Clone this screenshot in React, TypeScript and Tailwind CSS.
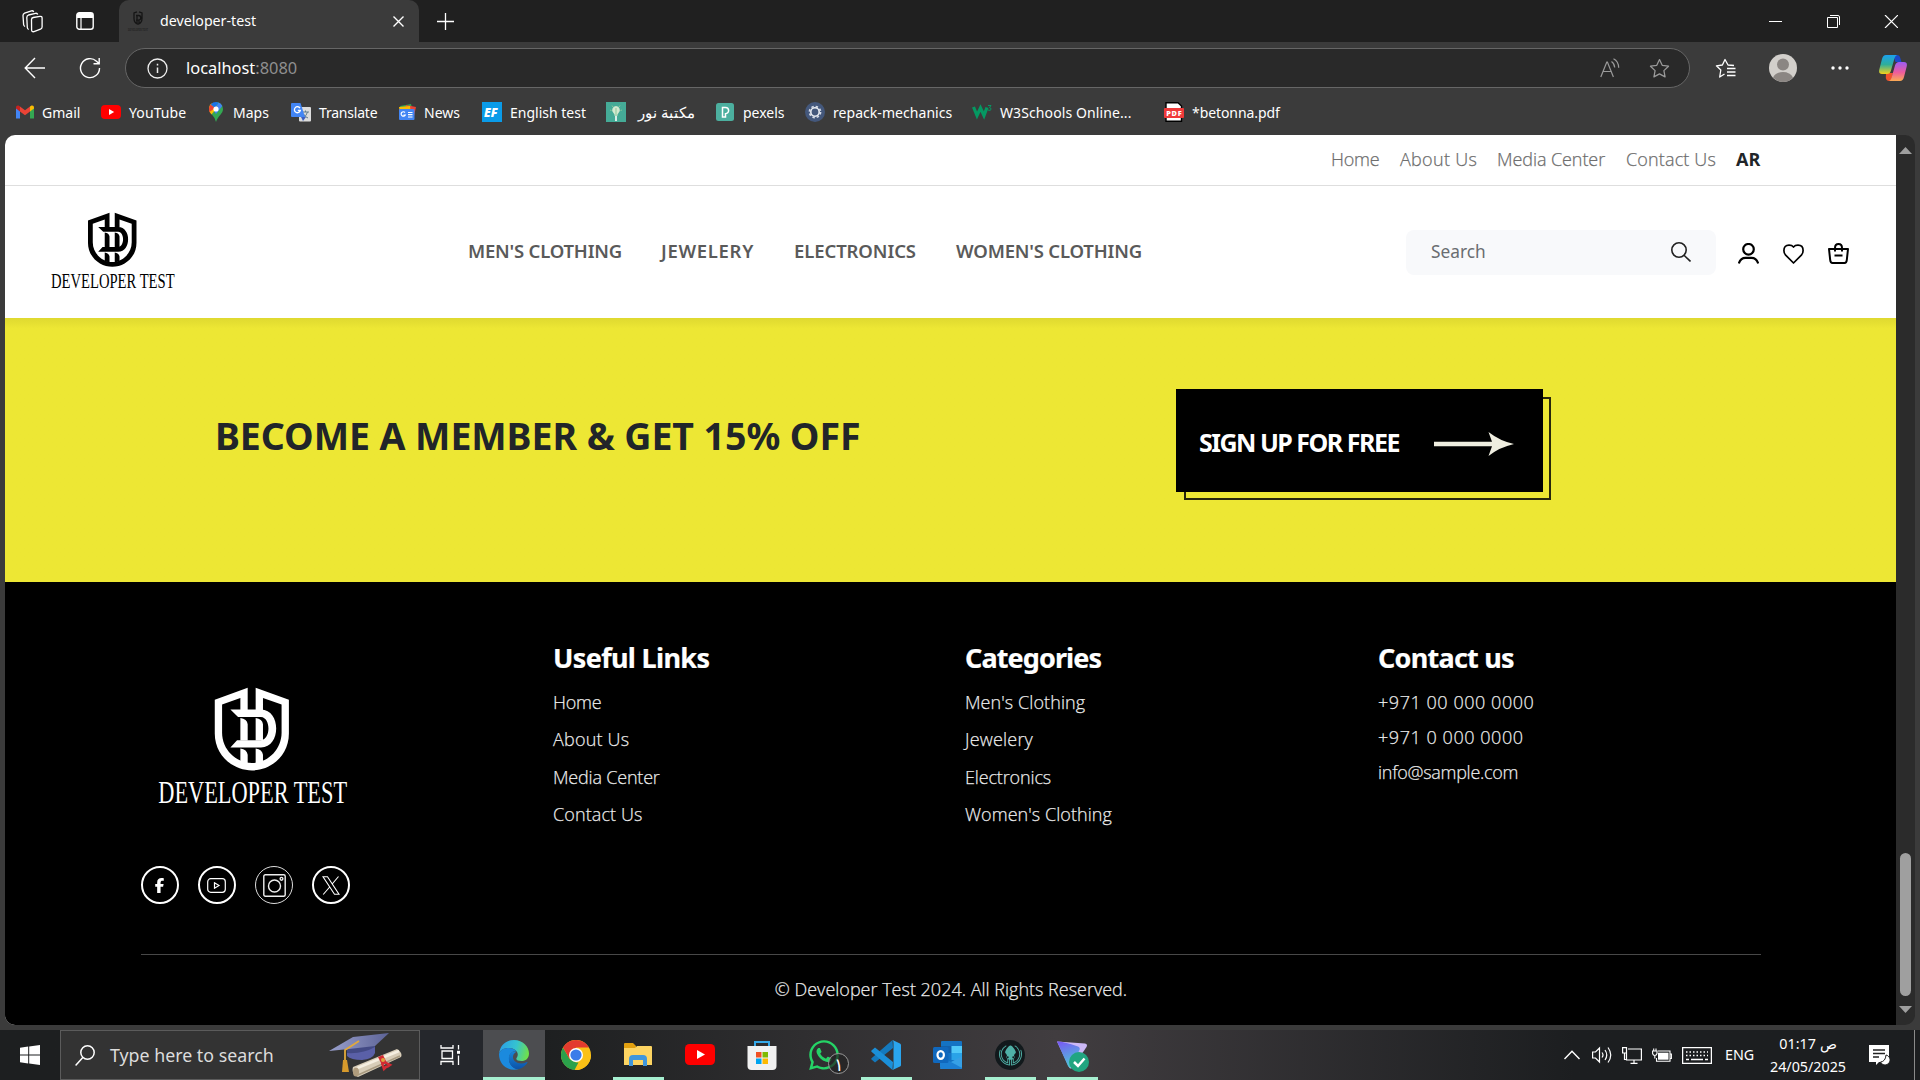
import React from "react";
import { FaFacebookF, FaWhatsapp } from "react-icons/fa6";
import { SiGitkraken } from "react-icons/si";

type Kids = { children?: React.ReactNode };

/* ---------- Brand ---------- */

function Logo({ className }: { className: string }) {
  return (
    <svg viewBox="115 80 570 352" className={`overflow-visible ${className}`} fill="currentColor">
      <path d="M384 82 285 118V220C285 288 342 331 397 331S508 288 508 220V118L408 82V150H430V113L486 133V218C486 268 445 309 397 309 348 309 307 268 307 218V133L362 113V150H384Z" />
      <path d="M332 148H424C485 148 485 262 424 262H332L352 240H424C454 238 454 172 424 170H355Z" />
      <path d="M362 173Q382 175 384 192V241H362ZM408 173Q428 175 430 192V241H408Z" />
      <path d="M362 265Q382 268 384 284V312L362 304ZM408 265Q428 268 430 284V304L408 312Z" />
      <text
        x="115"
        y="428"
        textLength="568"
        lengthAdjust="spacingAndGlyphs"
        className="font-['Liberation_Serif',serif] text-[98px]"
      >
        DEVELOPER TEST
      </text>
    </svg>
  );
}

/* ---------- Browser chrome ---------- */

function TabStrip() {
  return (
    <div className="flex h-[42px] items-center bg-[#202020] text-white">
      <svg className="ml-[22px] h-[24px] w-[21px]" viewBox="0 0 21 24" fill="none" stroke="currentColor" strokeWidth="1.300" strokeLinejoin="round">
        <path d="M9.500 10.500Q9.600 8.800 11.200 8.500L18 7.300Q20 7.100 20.100 9V18Q20 19.700 18.500 20.200L12 22.600Q9.700 23.200 9.600 21Z" />
        <path d="M6.700 20.500Q5.500 20 5.300 18.500L4.800 8.500Q4.900 6.500 6.500 6L13.500 4.300Q15.200 4 15.800 5.500" />
        <path d="M3 17.500Q1.800 17 1.600 15.500L1 6.500Q1 4.700 2.600 4.100L9.500 1.800Q11 1.500 11.800 2.800" />
      </svg>
      <svg className="ml-[33px] h-[18px] w-[18px]" viewBox="0 0 18 18">
        <rect x=".8" y=".8" width="16.400" height="16.400" rx="2.500" fill="none" stroke="#fff" strokeWidth="1.400" />
        <path d="M1 2.500Q1 1 2.500 1H15.500Q17 1 17 2.500V6H1Z" fill="#fff" />
        <path d="M5 6V17" stroke="#fff" strokeWidth="1.200" />
      </svg>
      <div className="ml-[25px] flex h-[42px] w-[300px] items-center rounded-t-[10px] bg-[#3b3b3b]">
        <svg className="ml-[9px] h-[20px] w-[20px] overflow-visible text-[#151515]" viewBox="0 0 20 20" fill="none" stroke="currentColor">
          <path d="M9 .8 6 2V7.500Q6 12 10 13.200 14 12 14 7.500V2L11 .8M8 4.500H10.500a2.300 2.300 0 0 1 0 4.600H8M9 4.500V12M11 9V12" strokeWidth="1.300" />
          <text x="0" y="19.500" textLength="20" lengthAdjust="spacingAndGlyphs" fontSize="5" fill="currentColor" stroke="none" className="font-['Liberation_Serif',serif]">
            DEVELOPER TEST
          </text>
        </svg>
        <span className="ml-[12px] w-[233px] text-[14.200px]">developer-test</span>
        <svg className="h-[11px] w-[11px]" viewBox="0 0 11 11" stroke="#fff" strokeWidth="1.400">
          <path d="M.5.500l10 10M10.500.5l-10 10" />
        </svg>
      </div>
      <svg className="ml-[18px] h-[17px] w-[17px]" viewBox="0 0 17 17" stroke="#fff" strokeWidth="1.300">
        <path d="M8.500 0v17M0 8.500h17" />
      </svg>
      <svg className="mr-[22px] ml-auto h-[13px] w-[129px]" viewBox="0 0 129 13" fill="none" stroke="#fff" strokeWidth="1">
        <path d="M0 6.500H13" />
        <path d="M58.500 2.500h10v10h-10zM61 .5h8q1.500 0 1.500 1.500v8" />
        <path d="M116 0l13 13M129 0l-13 13" strokeWidth="1.200" />
      </svg>
    </div>
  );
}

const starPath = "M10 1.500 12.600 7 18.600 7.800 14.200 12 15.300 18 10 15.100 4.700 18 5.800 12 1.400 7.800 7.400 7Z";

function AddressRow() {
  return (
    <div className="flex h-[52px] items-center bg-[#3b3b3b] text-white">
      <svg className="ml-[24px] h-[22px] w-[22px]" viewBox="0 0 22 22" fill="none" stroke="#fff" strokeWidth="1.400">
        <path d="M21 11H1.500M11 1 1.200 11 11 21" />
      </svg>
      <svg className="ml-[33px] h-[22px] w-[22px]" viewBox="0 0 22 22" fill="none" stroke="#fff" strokeWidth="1.400">
        <path d="M20.500 11A9.500 9.500 0 1 1 17.500 4.200L20 6.500M20.200 1V6.800H14.500" />
      </svg>
      <div className="ml-[24px] flex h-[40px] w-[1565px] items-center rounded-full border border-[#666] bg-[#292929]">
        <svg className="ml-[21px] h-[21px] w-[21px]" viewBox="0 0 21 21" fill="none" stroke="#eee" strokeWidth="1.300">
          <circle cx="10.500" cy="10.500" r="9.500" />
          <path d="M10.500 9.500v5.500M10.500 5.800v1.600" strokeWidth="1.500" />
        </svg>
        <span className="ml-[18px] text-[16.400px]">
          localhost<span className="text-[#8f8f8f]">:8080</span>
        </span>
        <svg className="mb-[1px] ml-auto h-[20px] w-[20px]" viewBox="0 0 20 20" fill="none" stroke="#9a9a9a" strokeWidth="1.200">
          <path d="M.8 19 6.800 4h.6l6 15M3 13.500h8.200M11.500 3.500q3 2 3.200 6M13.500.8q5 2.500 5.200 9" />
        </svg>
        <svg className="mr-[19px] ml-[29px] h-[21px] w-[21px]" viewBox="0 0 20 20" fill="none" stroke="#9a9a9a" strokeWidth="1.200" strokeLinejoin="round">
          <path d={starPath} />
        </svg>
      </div>
      <svg className="ml-[25px] h-[21px] w-[21px]" viewBox="0 0 21 21" fill="none" stroke="#fff" strokeWidth="1.300" strokeLinejoin="round">
        <path d="M19 7.500 13 7 10 1.500 7.400 7 1.400 7.800 5.800 12 4.700 19 9.500 16M12 10.500h8.500M12 14h8.500M12 17.500h8.500" />
      </svg>
      <svg className="ml-[33px] h-[28px] w-[28px]" viewBox="0 0 28 28">
        <circle cx="14" cy="14" r="14" fill="#d2cfcb" />
        <circle cx="14" cy="10.500" r="6" fill="#8b8683" />
        <path d="M4 23.500Q7 18 14 18T24 23.500Q20 28 14 28T4 23.500Z" fill="#8b8683" />
      </svg>
      <svg className="ml-[34px] h-1 w-[18px]" viewBox="0 0 18 4" fill="#fff">
        <circle cx="2" cy="2" r="1.700" />
        <circle cx="9" cy="2" r="1.700" />
        <circle cx="16" cy="2" r="1.700" />
      </svg>
      <svg className="ml-[30px] h-[26px] w-[28px]" viewBox="0 0 28 26">
        <defs>
          <linearGradient id="cpA" x1="0" y1="0" x2="0" y2="1">
            <stop offset="0" stopColor="#1ba1ee" />
            <stop offset=".5" stopColor="#2fae9a" />
            <stop offset="1" stopColor="#f4d21b" />
          </linearGradient>
          <linearGradient id="cpB" x1="0" y1="0" x2="0" y2="1">
            <stop offset="0" stopColor="#9c5cf4" />
            <stop offset=".55" stopColor="#ee5c9c" />
            <stop offset="1" stopColor="#fbab53" />
          </linearGradient>
        </defs>
        <path d="M14 0h4q2.500 0 3.300 3l1.200 4h-6z" fill="#1b48c8" />
        <path d="M7 18h7l-2 8H10q-2.500 0-3.200-3z" fill="#f0522d" />
        <path d="M7 0h11q-1.800.5-2.600 3.500L12 15.500Q11 19 8 19H3Q-.7 19 .3 14.500L3 4Q4 0 7 0Z" fill="url(#cpA)" />
        <path d="M21 26H10q1.800-.5 2.600-3.500L16 10.500Q17 7 20 7h5q3.700 0 2.700 4.500L25 22q-1 4-4 4Z" fill="url(#cpB)" />
      </svg>
    </div>
  );
}

function BookmarkIcon({ children }: Kids) {
  return (
    <svg className="h-5 w-5 shrink-0" viewBox="0 0 20 20">
      {children}
    </svg>
  );
}

function Bookmark({ icon, label, width, textClass = "" }: { icon: React.ReactNode; label: string; width: string; textClass?: string }) {
  return (
    <div className={`flex items-center gap-[7px] whitespace-nowrap ${width}`}>
      <BookmarkIcon>{icon}</BookmarkIcon>
      <span className={textClass}>{label}</span>
    </div>
  );
}

function Bookmarks() {
  return (
    <div className="flex h-[41px] items-center bg-[#3b3b3b] pb-[5px] pl-[15px] text-[14px] text-white">
      <Bookmark
        width="w-[86px]"
        label="Gmail"
        icon={
          <>
            <path d="M1 5.500V16.500h4V9z" fill="#4285f4" />
            <path d="M19 5.500V16.500h-4V9z" fill="#34a853" />
            <path d="M1 5.500Q1 3 3.500 3.500L5 4.500V9.500L1 6.500z" fill="#c5221f" />
            <path d="M5 4.500 10 8.300 15 4.500V9.500L10 13.300 5 9.500z" fill="#ea4335" />
            <path d="M15 4.500 16.500 3.500Q19 3 19 5.500V6.500L15 9.500z" fill="#fbbc04" />
          </>
        }
      />
      <Bookmark
        width="w-[105px]"
        label="YouTube"
        textClass="pl-px tracking-[0.100px]"
        icon={
          <>
            <rect y="3" width="20" height="14" rx="4" fill="#f00" />
            <path d="M8 7v6l5.200-3z" fill="#fff" />
          </>
        }
      />
      <Bookmark
        width="w-[85px]"
        label="Maps"
        icon={
          <>
            <path d="M10 0a7 7 0 0 1 7 7c0 5-5 6.500-7 13Q8.500 15 5.500 12z" fill="#34a853" />
            <path d="M3 7q0 3 2.500 5.500L12 4.500 6 1.200Q3 3 3 7Z" fill="#fbbc04" />
            <path d="M4.700 2.500 9 6 3.500 10Q2 6 4.700 2.500Z" fill="#ea4335" />
            <path d="M4.700 2.500Q8-1 12.500.5L9 6z" fill="#1a73e8" />
            <path d="M12.500.5Q15 1.200 16.300 4L10 12 8 9z" fill="#4285f4" />
            <circle cx="10" cy="7" r="2.600" fill="#fff" />
          </>
        }
      />
      <Bookmark
        width="w-[106px]"
        label="Translate"
        textClass="pl-px tracking-[-0.200px]"
        icon={
          <>
            <rect x="8" y="5" width="12" height="14.500" rx="1" fill="#dcdcdc" />
            <path d="M11 10h7M14.500 8.500V10M16.500 10q-1 4-4.500 6M12.500 12q1.500 3 4.500 4" stroke="#607d8b" fill="none" />
            <path d="M10 15h5l-3 4z" fill="#3b5fc0" />
            <path d="M1 1h8.500L14 15H1Q0 15 0 14V2Q0 1 1 1Z" fill="#4285f4" />
            <path d="M9 6.200A3 3 0 1 0 9.300 8.500H6.800" stroke="#fff" strokeWidth="1.300" fill="none" />
          </>
        }
      />
      <Bookmark
        width="w-[85px]"
        label="News"
        icon={
          <>
            <path d="M3 4 14 2l2 8H5z" fill="#34a853" />
            <path d="M9 3 19 5l-2 9-9-3z" fill="#ea4335" />
            <path d="M2 5l11-1 1 8H3z" fill="#fbbc04" />
            <rect x="2" y="7" width="15.500" height="11" rx="1" fill="#4285f4" />
            <path d="M8 10.500A2.200 2.200 0 1 0 8.300 13H6.500M11 10.500h4.500M11 12.700h4.500M11 15h4.500" stroke="#fff" strokeWidth="1.200" fill="none" />
          </>
        }
      />
      <Bookmark
        width="w-[124px]"
        label="English test"
        textClass="pl-px"
        icon={
          <>
            <path d="M0 0H20V20H0Z" fill="#0a9be8" />
            <text x="2" y="14.500" fontSize="12" className="font-['Open_Sans',sans-serif] font-extrabold italic" fill="#fff">
              EF
            </text>
          </>
        }
      />
      <Bookmark
        width="w-[109px]"
        label="مكتبة نور"
        textClass="ml-[5px] text-[15px]"
        icon={
          <>
            <path d="M0 0H20V20H0Z" fill="#45ab97" />
            <path d="M10 19V12" stroke="#fff" strokeWidth="1.600" />
            <path d="M10 4a4 4 0 0 1 2.500 7q-1.200 1-1.200 3H8.700q0-2-1.200-3A4 4 0 0 1 10 4Z" fill="#d4ead0" />
            <path d="M10 6v8M4 8l1.500.5M16 8l-1.500.5M6 3.500 7 5M14 3.500 13 5" stroke="#8bc79a" />
          </>
        }
      />
      <Bookmark
        width="w-[90px]"
        label="pexels"
        textClass="pl-px"
        icon={
          <>
            <rect x="1" y="1" width="18" height="18" rx="2.500" fill="#4caf9f" />
            <path d="M7.500 15V5.500H10.500a3 3 0 0 1 0 6.200V15z" stroke="#fff" strokeWidth="1.500" fill="none" />
          </>
        }
      />
      <Bookmark
        width="w-[167px]"
        label="repack-mechanics"
        textClass="pl-px tracking-[0.050px]"
        icon={
          <>
            <circle cx="10" cy="10" r="10" fill="#44587c" />
            <circle cx="10" cy="10" r="5.600" fill="none" stroke="#d6dce8" strokeWidth="1.600" strokeDasharray="2.400 2" />
            <circle cx="10" cy="10" r="4.200" fill="none" stroke="#e8ecf2" strokeWidth="1.600" />
          </>
        }
      />
      <Bookmark
        width="w-[192px]"
        label="W3Schools Online..."
        textClass="pl-px tracking-[0.100px]"
        icon={
          <>
            <path d="M1.500 5 5 13.500 8.500 6 12 13.500 15 5.500" stroke="#059862" strokeWidth="3.200" fill="none" />
            <path d="M16 3.500h3l-1.500 2Q19.500 6 19 7.500T16 8" stroke="#059862" fill="none" />
          </>
        }
      />
      <Bookmark
        width="w-[130px]"
        label="*betonna.pdf"
        textClass="pl-px tracking-[-0.080px]"
        icon={
          <>
            <path d="M2 .7h12L17.500 4V19.300H2z" fill="#fff" stroke="#000" strokeWidth="1.400" />
            <rect y="6" width="20" height="10" rx="1" fill="#f03a3a" />
            <text x="2.200" y="13.700" fontSize="7.300" textLength="15.500" className="font-['Open_Sans',sans-serif] font-extrabold" fill="#fff">
              PDF
            </text>
          </>
        }
      />
    </div>
  );
}

/* ---------- Shop page ---------- */

function TopLinks() {
  return (
    <div className="flex h-[51px] items-center border-b border-[#dedede] pb-px font-['Open_Sans',sans-serif] text-[18px] font-light whitespace-nowrap text-[#666] [-webkit-text-stroke:0.25px_#777]">
      <span className="ml-[1326px] w-[69px] tracking-[-0.200px]">Home</span>
      <span className="w-[97px] tracking-[0.300px]">About Us</span>
      <span className="w-[129px] tracking-[-0.080px]">Media Center</span>
      <span className="w-[110px] tracking-[0.150px]">Contact Us</span>
      <span className="font-bold text-[#212529] [-webkit-text-stroke:0]">AR</span>
    </div>
  );
}

function ShopHeader() {
  return (
    <div className="flex h-[132px] items-center text-[#5a5a5a]">
      <Logo className="mb-[3px] ml-[46px] h-[77px] w-[124px] text-black" />
      <nav className="mb-[2px] ml-[293px] flex text-[18.500px] font-semibold whitespace-nowrap">
        <span className="w-[193px] tracking-[-0.200px]">MEN'S CLOTHING</span>
        <span className="w-[133px] tracking-[0.700px]">JEWELERY</span>
        <span className="w-[162px] tracking-[-0.100px]">ELECTRONICS</span>
        <span className="w-[187px] tracking-[-0.180px]">WOMEN'S CLOTHING</span>
      </nav>
      <div className="ml-[263px] flex h-[45px] w-[310px] items-center rounded-lg bg-[#f8f9fb] pl-[25px] text-[17.300px] text-[#6a6d71]">
        Search
        <svg className="mr-[25px] ml-auto h-5 w-5" viewBox="0 0 20 20" fill="none" stroke="#222" strokeWidth="1.600">
          <circle cx="8" cy="8" r="7.200" />
          <path d="M13 13.200 19.500 19.500" />
        </svg>
      </div>
      <svg className="mt-[3px] ml-[22px] h-[21px] w-[21px]" viewBox="0 0 21 21" fill="none" stroke="#000" strokeWidth="2.200">
        <circle cx="10.500" cy="6.300" r="5.300" />
        <path d="M.8 20.500Q2.500 14.800 7.500 14.800h6Q18.500 14.800 20.200 20.500" />
      </svg>
      <svg className="mt-[3px] ml-[24px] h-[20px] w-[21px]" viewBox="0 0 21 20" fill="none" stroke="#000" strokeWidth="1.700" strokeLinejoin="round">
        <path d="M10.500 19 2.400 10.800Q.9 9 .9 6.500Q.9 1.200 6 1.200 9 1.200 10.500 3 12 1.200 15 1.200 20.100 1.200 20.100 6.500 20.100 9 18.600 10.800Z" />
      </svg>
      <svg className="mt-[3px] ml-[24px] h-[21px] w-[21px]" viewBox="0 0 21 21" fill="none" stroke="#000" strokeWidth="2" strokeLinejoin="round">
        <path d="M1 6H20L18.800 17Q18.500 20 16.500 20H4.500Q2.500 20 2.200 17ZM6.500 12.500h8M7 8.500V5Q7 1 10.500 1T14 5V8.500" />
      </svg>
    </div>
  );
}

function MemberBanner() {
  return (
    <section className="flex h-[264px] items-start bg-[#ede734] bg-linear-to-b from-[#dfd930] from-0% to-[#ede734] to-4%">
      <h2 className="mt-[92px] ml-[210px] w-[961px] text-[37.500px] leading-[52px] font-bold tracking-[-0.070px] whitespace-nowrap text-[#212529]">
        BECOME A MEMBER &amp; GET 15% OFF
      </h2>
      <div className="relative mt-[71px] h-[103px] w-[367px]">
        <div className="absolute top-2 left-2 h-[103px] w-[367px] border-2 border-[#28270c]" />
        <div className="relative flex h-[103px] items-center bg-black pl-[23px] text-white">
          <span className="mt-[4px] w-[235px] text-[25px] font-bold tracking-[-1.500px] whitespace-nowrap">SIGN UP FOR FREE</span>
          <svg className="mt-[7px] h-[24px] w-[80px]" viewBox="0 0 80 24" fill="#efeee0">
            <path d="M0 9.800H58L54.500 0Q66 9 80 12 66 15 54.500 24L58 14.200H0Z" />
          </svg>
        </div>
      </div>
    </section>
  );
}

function SocialIcon({ children }: Kids) {
  return <span className="flex h-[38px] w-[38px] items-center justify-center rounded-full border-2 border-white">{children}</span>;
}

function ShopFooter() {
  return (
    <footer className="flex h-[443px] flex-col bg-black px-[136px] font-['Open_Sans',sans-serif] text-[18px] font-light text-white [-webkit-text-stroke:0.25px_#ccc]">
      <div className="-mr-px flex h-[373px] border-b border-[#484848]">
        <div className="w-[412px] pt-[105px] [-webkit-text-stroke:0]">
          <Logo className="ml-[17px] h-[117px] w-[190px]" />
          <div className="-ml-[0.500px] mt-[62px] flex gap-[19.300px]">
            <SocialIcon>
              <FaFacebookF className="h-[15px] w-[15px]" />
            </SocialIcon>
            <SocialIcon>
              <svg className="h-[15px] w-[19px]" viewBox="0 0 19 15" fill="none" stroke="#fff" strokeWidth="1.200">
                <rect x=".7" y=".7" width="17.600" height="13.600" rx="3" />
                <path d="M7.500 4.800v5.400L12 7.500z" />
              </svg>
            </SocialIcon>
            <span className="flex h-[38px] w-[38px] items-center justify-center rounded-full border border-[#ddd]">
              <svg className="h-[23px] w-[23px]" viewBox="0 0 23 23" fill="none" stroke="#eee" strokeWidth="1.400">
                <rect x=".8" y=".8" width="21.400" height="21.400" rx="1.500" />
                <circle cx="11.500" cy="12" r="6" />
                <circle cx="18.500" cy="4.800" r="1.400" />
              </svg>
            </span>
            <SocialIcon>
              <svg className="h-[19px] w-[18px]" viewBox="0 0 18 19" fill="none" stroke="#fff" strokeWidth="1.100">
                <path d="M1 .8H5.500L17 18.200H12.500ZM16.500.5 10.200 8M7.700 11 1.200 18.500" />
              </svg>
            </SocialIcon>
          </div>
        </div>
        <div className="w-[412px] pt-[57px] leading-[37.400px] whitespace-nowrap">
          <h3 className="mb-[7px] font-['Noto_Sans',sans-serif] text-[27px] leading-[38px] font-bold tracking-[-0.650px] [-webkit-text-stroke:0.2px_#fff]">Useful Links</h3>
          <p className="tracking-[-0.200px]">Home</p>
          <p className="tracking-[0.200px]">About Us</p>
          <p className="tracking-[-0.200px]">Media Center</p>
          <p className="tracking-[0.100px]">Contact Us</p>
        </div>
        <div className="w-[413px] pt-[57px] leading-[37.400px] whitespace-nowrap">
          <h3 className="mb-[7px] font-['Noto_Sans',sans-serif] text-[27px] leading-[38px] font-bold tracking-[-0.900px] [-webkit-text-stroke:0.2px_#fff]">Categories</h3>
          <p className="tracking-[0.080px]">Men's Clothing</p>
          <p className="tracking-[0.200px]">Jewelery</p>
          <p className="tracking-[-0.150px]">Electronics</p>
          <p className="tracking-[0.050px]">Women's Clothing</p>
        </div>
        <div className="pt-[57px] leading-[35.200px] whitespace-nowrap">
          <h3 className="mb-[8px] font-['Noto_Sans',sans-serif] text-[27px] leading-[38px] font-bold tracking-[-0.750px] [-webkit-text-stroke:0.2px_#fff]">Contact us</h3>
          <p className="tracking-[0.550px]">+971 00 000 0000</p>
          <p className="tracking-[0.550px]">+971 0 000 0000</p>
          <p className="tracking-[-0.280px]">info@sample.com</p>
        </div>
      </div>
      <p className="mt-[20px] pl-px text-center leading-[28px]">© Developer Test 2024. All Rights Reserved.</p>
    </footer>
  );
}

function Scrollbar() {
  return (
    <div className="flex w-[19px] flex-col items-center bg-[#2b2b2b]">
      <svg className="mt-[12px] h-[7px] w-[13px]" viewBox="0 0 13 7" fill="#9f9f9f">
        <path d="M6.500 0 13 7H0Z" />
      </svg>
      <div className="mt-[699px] h-[143px] w-[11px] rounded-full bg-[#9f9f9f]" />
      <svg className="mt-[10px] h-[7px] w-[13px]" viewBox="0 0 13 7" fill="#9f9f9f">
        <path d="M6.500 7 13 0H0Z" />
      </svg>
    </div>
  );
}

/* ---------- Windows taskbar ---------- */

function TaskApp({ children, state = "" }: Kids & { state?: "" | "open" | "active" }) {
  return (
    <div className={`flex h-[50px] w-[62px] flex-col items-center ${state === "active" ? "bg-[#4c4d50]" : ""}`}>
      <div className="flex h-[47px] items-center justify-center pt-[3px]">{children}</div>
      <div className={`h-[3px] ${state === "active" ? "w-[62px] bg-[#a6efd0]" : state === "open" ? "w-[51px] bg-[#a6efd0]" : ""}`} />
    </div>
  );
}

function AppSvg({ children }: Kids) {
  return (
    <svg className="h-[30px] w-[30px] overflow-visible" viewBox="0 0 30 30">
      {children}
    </svg>
  );
}

function GraduationArt() {
  return (
    <svg className="-ml-px h-[44px] w-[73px]" viewBox="0 0 73 44">
      <defs>
        <linearGradient id="cap" x1="0" y1="0" x2="1" y2="0">
          <stop offset="0" stopColor="#9aa0cc" />
          <stop offset="1" stopColor="#5c6397" />
        </linearGradient>
      </defs>
      <path d="M18 14 46 10V20Q44 26 33 27 22 27 18 23Z" fill="#5a60a8" />
      <path d="M18 14 46 10V14Q34 21 18 20Z" fill="#434a85" />
      <path d="M0 18 24 4 60 0 46 13 20 16Z" fill="url(#cap)" />
      <path d="M30 8 16 17V29" stroke="#e2a93b" strokeWidth="1.800" fill="none" />
      <path d="M14 27h4l2 12h-7z" fill="#d79a2c" />
      <path d="M24 34 68 16Q74 20 72 24L29 44Q22 41 24 34Z" fill="#d8cdb8" />
      <path d="M26 36 70 18" stroke="#f5eee0" strokeWidth="2.500" />
      <path d="M29 42 71 23" stroke="#a89a80" strokeWidth="1.500" />
      <ellipse cx="27" cy="39" rx="3" ry="4.500" fill="#b09c7d" />
      <path d="M49 24l5-2 4 8-5 2z" fill="#d22b33" />
      <path d="M53 28l8 4-3 2M53 30l2 6 3-3" stroke="#d22b33" strokeWidth="2.500" fill="none" />
      <circle cx="54" cy="27" r="2" fill="#e0a33e" />
    </svg>
  );
}

function Taskbar() {
  return (
    <div className="flex h-[50px] items-center bg-linear-to-r from-[#1d1f20] from-28% via-[#413d40] via-55% to-[#1c1e20] to-82% text-white">
      <svg className="ml-[20px] h-5 w-5" viewBox="0 0 20 20" fill="#fff">
        <path d="M0 2.800 8.200 1.600V9.500H0ZM9.200 1.500 20 0V9.500H9.200ZM0 10.500H8.200V18.400L0 17.200ZM9.200 10.500H20V20L9.200 18.500Z" />
      </svg>
      <div className="ml-[20px] flex h-[50px] w-[360px] items-center border border-[#5b5b5b] bg-[#333]">
        <svg className="ml-[14px] h-[21px] w-[20px]" viewBox="0 0 20 21" fill="none" stroke="#fff" strokeWidth="1.500">
          <circle cx="12.500" cy="7.500" r="6.700" />
          <path d="M7.800 12.500.6 20.400" />
        </svg>
        <span className="ml-[15px] w-[220px] text-[17.800px] text-[#dcdcdc]">Type here to search</span>
        <GraduationArt />
      </div>
      <div className="flex h-[50px] w-[63px] items-center justify-center bg-[#25272c]">
        <svg className="mr-[3px] h-5 w-5" viewBox="0 0 20 20" fill="none" stroke="#fff" strokeWidth="1.300">
          <path d="M1 0V3H13V0M1 20V16.500H13V20M2 6h10.500v7.500H2zM18.500 0V4.500M18.500 10.500V20" />
          <path d="M17 5.800h3v3h-3z" fill="#fff" stroke="none" />
        </svg>
      </div>
      <TaskApp state="active">
        <AppSvg>
          <defs>
            <linearGradient id="edgeTop" x1="0" y1=".3" x2="1" y2=".5">
              <stop offset="0" stopColor="#2a9fe8" />
              <stop offset=".55" stopColor="#35c3d0" />
              <stop offset="1" stopColor="#6fe04a" />
            </linearGradient>
            <linearGradient id="edgeLow" x1="0" y1="0" x2="0" y2="1">
              <stop offset="0" stopColor="#1686d8" />
              <stop offset="1" stopColor="#0c52a8" />
            </linearGradient>
          </defs>
          <path d="M0 14C1 5 7 0 15 0 24 0 30 6.500 30 13.500 30 18.500 26.500 21 22.500 21 19.500 21 17.300 20 17.300 18.700 17.300 17.800 18.800 17 18.800 14.500 18.800 11 15 8 10 8 5 8 1 10 0 14Z" fill="url(#edgeTop)" />
          <path d="M0 14C1 10 5 8 10 8 13 8 16 9.500 17.500 11.500 14 10.500 10 13.500 10 18.500 10 25 15 29.500 20 29 10 32 0 25.500 0 14Z" fill="#1b8ade" />
          <path d="M17.500 11.800C13 10.500 9.800 14 9.800 18.500 9.800 25 15 29.800 20 29 24 28 27 25 28.500 22.500 28.700 22 28 21.800 27.500 22.200 21 25.500 13.500 22 14 16.500 14.200 14.500 15.500 13 17.500 11.800Z" fill="url(#edgeLow)" />
        </AppSvg>
      </TaskApp>
      <TaskApp>
        <AppSvg>
          <circle cx="15" cy="15" r="15" fill="#fbc116" />
          <path d="M15 15H30A15 15 0 0 1 14 30L21.500 18.500Z" fill="#fbc116" />
          <path d="M2 7.500 8.500 18.800 15 22.500H17.500L13.500 30A15 15 0 0 1 2 7.500Z" fill="#2ba14b" />
          <path d="M2 7.500A15 15 0 0 1 28 7.500H15L8.500 18.800Z" fill="#e33b2e" />
          <circle cx="15" cy="15" r="7" fill="#fff" />
          <circle cx="15" cy="15" r="5.600" fill="#3b7de9" />
        </AppSvg>
      </TaskApp>
      <TaskApp state="open">
        <AppSvg>
          <path d="M1 4Q1 3 2 3H10L13 6V12H1Z" fill="#e2a00f" />
          <path d="M1 8H12L14 6H28Q29 6 29 7V25H1Z" fill="#fcd462" />
          <path d="M6 26V19Q6 15 10 15H20Q24 15 24 19V26H20V20H10V26Z" fill="#3f96dc" />
        </AppSvg>
      </TaskApp>
      <TaskApp>
        <AppSvg>
          <rect y="4" width="30" height="21" rx="4.500" fill="#f00" />
          <path d="M12 10v9l8-4.500z" fill="#fff" />
        </AppSvg>
      </TaskApp>
      <TaskApp>
        <AppSvg>
          <path d="M8 7V2H22V7" stroke="#35a8e8" strokeWidth="2" fill="none" />
          <path d="M.5 6H29.500V26Q29.500 30 25.500 30H4.500Q.5 30 .5 26Z" fill="#f1f1f1" />
          <path d="M9 12h5.500v5.500H9z" fill="#f05023" />
          <path d="M15.500 12H21v5.500h-5.500z" fill="#7fba00" />
          <path d="M9 18.500h5.500V24H9z" fill="#00a4ef" />
          <path d="M15.500 18.500H21V24h-5.500z" fill="#fdb900" />
        </AppSvg>
      </TaskApp>
      <TaskApp>
        <span className="relative">
          <FaWhatsapp className="h-[34px] w-[34px] text-[#25d366]" />
          <span className="absolute top-[15px] left-[21px] flex h-[21px] w-[21px] items-center justify-center rounded-full border border-[#999] bg-[#222]/70 text-[18px] leading-none">
            ١
          </span>
        </span>
      </TaskApp>
      <TaskApp state="open">
        <AppSvg>
          <path d="M21.500 0 22 8 4 22.500 .5 19.500Q-.2 19 .5 18.200Z" fill="#1479bd" />
          <path d="M21.500 30 22 22 4 7.500 .5 10.500Q-.2 11 .5 11.800Z" fill="#1b8fd8" />
          <path d="M21.500 0 29 3.500Q30 4 30 5V25Q30 26 29 26.500L21.500 30Q22.500 29 22.500 27V3Q22.500 1 21.500 0Z" fill="#2aa5ee" />
        </AppSvg>
      </TaskApp>
      <TaskApp>
        <AppSvg>
          <path d="M9 1H28Q29 1 29 2V28Q29 29 28 29H8V2Q8 1 9 1Z" fill="#1473c4" />
          <path d="M8 6h10.500v7H8z" fill="#1261ac" />
          <path d="M18.500 6H29v7H18.500z" fill="#50c8f8" />
          <path d="M18.500 13H29v7H18.500z" fill="#2aa3e8" />
          <path d="M7 28 29 16V27Q29 29 27 29H9Q7 29 7 28Z" fill="#36a0e6" />
          <path d="M7 16 29 28Q28.500 29 27 29H9Q7 29 7 27Z" fill="#1c7fd3" />
          <rect y="7" width="15.500" height="16" rx="1.500" fill="#1068bd" />
          <ellipse cx="7.700" cy="15" rx="3.200" ry="3.800" fill="none" stroke="#fff" strokeWidth="2.200" />
        </AppSvg>
      </TaskApp>
      <TaskApp state="open">
        <span className="flex h-[30px] w-[30px] items-center justify-center rounded-full bg-[#12191c]">
          <SiGitkraken className="h-[23px] w-[23px] text-[#4fb0a6]" />
        </span>
      </TaskApp>
      <TaskApp state="open">
        <AppSvg>
          <defs>
            <linearGradient id="vpn" x1="0" y1="0" x2=".3" y2="1">
              <stop offset="0" stopColor="#7a55f5" />
              <stop offset="1" stopColor="#4fc3d8" />
            </linearGradient>
          </defs>
          <path d="M0 1.500 28 3.500Q31 4 29.500 7L16 27Q13.500 30 12 27Z" fill="#cbb8f6" />
          <path d="M0 1.500Q5 1 21 6.500 24 8 22 11L15 25Q13.500 30 11 26Z" fill="url(#vpn)" />
          <circle cx="22" cy="22" r="10" fill="#21a580" />
          <path d="M17 22 21 26 27.500 18.500" stroke="#fff" strokeWidth="2.500" fill="none" />
        </AppSvg>
      </TaskApp>
      <div className="ml-auto flex items-center">
        <svg className="h-[10px] w-4" viewBox="0 0 16 10" fill="none" stroke="#fff" strokeWidth="1.400">
          <path d="M.5 9 8 1.200 15.500 9" />
        </svg>
        <svg className="ml-[12px] h-[18px] w-[20px]" viewBox="0 0 20 18" fill="none" stroke="#fff" strokeWidth="1.200">
          <path d="M.6 6H3.500L7.500 2V16L3.500 12H.6ZM10 6.500Q12 9 10 11.500M13 4Q16.500 9 13 14M16 1.500Q21.500 9 16 16.500" />
        </svg>
        <svg className="ml-[10px] h-[17px] w-[20px]" viewBox="0 0 20 17" fill="none" stroke="#fff" strokeWidth="1.200">
          <path d="M6 2H19.400V13H4.500V6M12 13v3M8.500 16.300h7M.6.600H4.500V6H.6ZM2.500 6V12.500H4.500" />
        </svg>
        <svg className="ml-[10px] h-[14px] w-[20px]" viewBox="0 0 20 14" fill="none" stroke="#fff" strokeWidth="1.100">
          <path d="M6 3H18V13.300H4.500V10M18 6h1.400v4.500H18M.6 3H5V5.500Q4.500 7.500 2.800 7.500T.6 5.500ZM1.700 .5V3M4 .5V3M2.800 7.500V10.500" />
          <path d="M6 4.700h10.500v7H6z" fill="#fff" stroke="none" />
        </svg>
        <svg className="ml-[10px] h-[17px] w-[30px]" viewBox="0 0 30 17" fill="none" stroke="#fff" strokeWidth="1.300">
          <rect x=".6" y=".6" width="28.800" height="15.800" />
          <path d="M4 5H26M4 8.500H26" strokeDasharray="1.500 2" />
          <path d="M4 12.500h3M9 12.500h12M23 12.500h3" />
        </svg>
        <span className="ml-[13px] w-[43px] text-[14.300px] leading-5">ENG</span>
        <div className="flex w-[80px] flex-col items-center text-[14.300px] leading-[23px] whitespace-nowrap">
          <span>01:17 ص</span>
          <span>24/05/2025</span>
        </div>
        <svg className="ml-[21px] h-[21px] w-[21px]" viewBox="0 0 21 21">
          <path d="M0 0H20V17H10L7 20V17H0Z" fill="#fff" />
          <path d="M4 5H16M4 8.500H16M4 12H10" stroke="#222" strokeWidth="1.400" />
          <path d="M17 10A5 5 0 1 1 11.500 17Q16.500 16.500 17 10Z" fill="#fff" stroke="#222" strokeWidth="1" />
        </svg>
        <div className="mr-[5px] ml-[24px] h-[50px] w-px bg-[#8a8a8a]" />
      </div>
    </div>
  );
}

export default function App() {
  return (
    <div className="flex h-[1080px] w-[1920px] flex-col overflow-hidden bg-[#3b3b3b] font-['Noto_Sans',sans-serif]">
      <TabStrip />
      <AddressRow />
      <Bookmarks />
      <main className="mx-[5px] flex h-[890px] overflow-hidden rounded-[10px]">
        <div className="w-[1891px] bg-white">
          <TopLinks />
          <ShopHeader />
          <MemberBanner />
          <ShopFooter />
        </div>
        <Scrollbar />
      </main>
      <div className="h-[5px]" />
      <Taskbar />
    </div>
  );
}
